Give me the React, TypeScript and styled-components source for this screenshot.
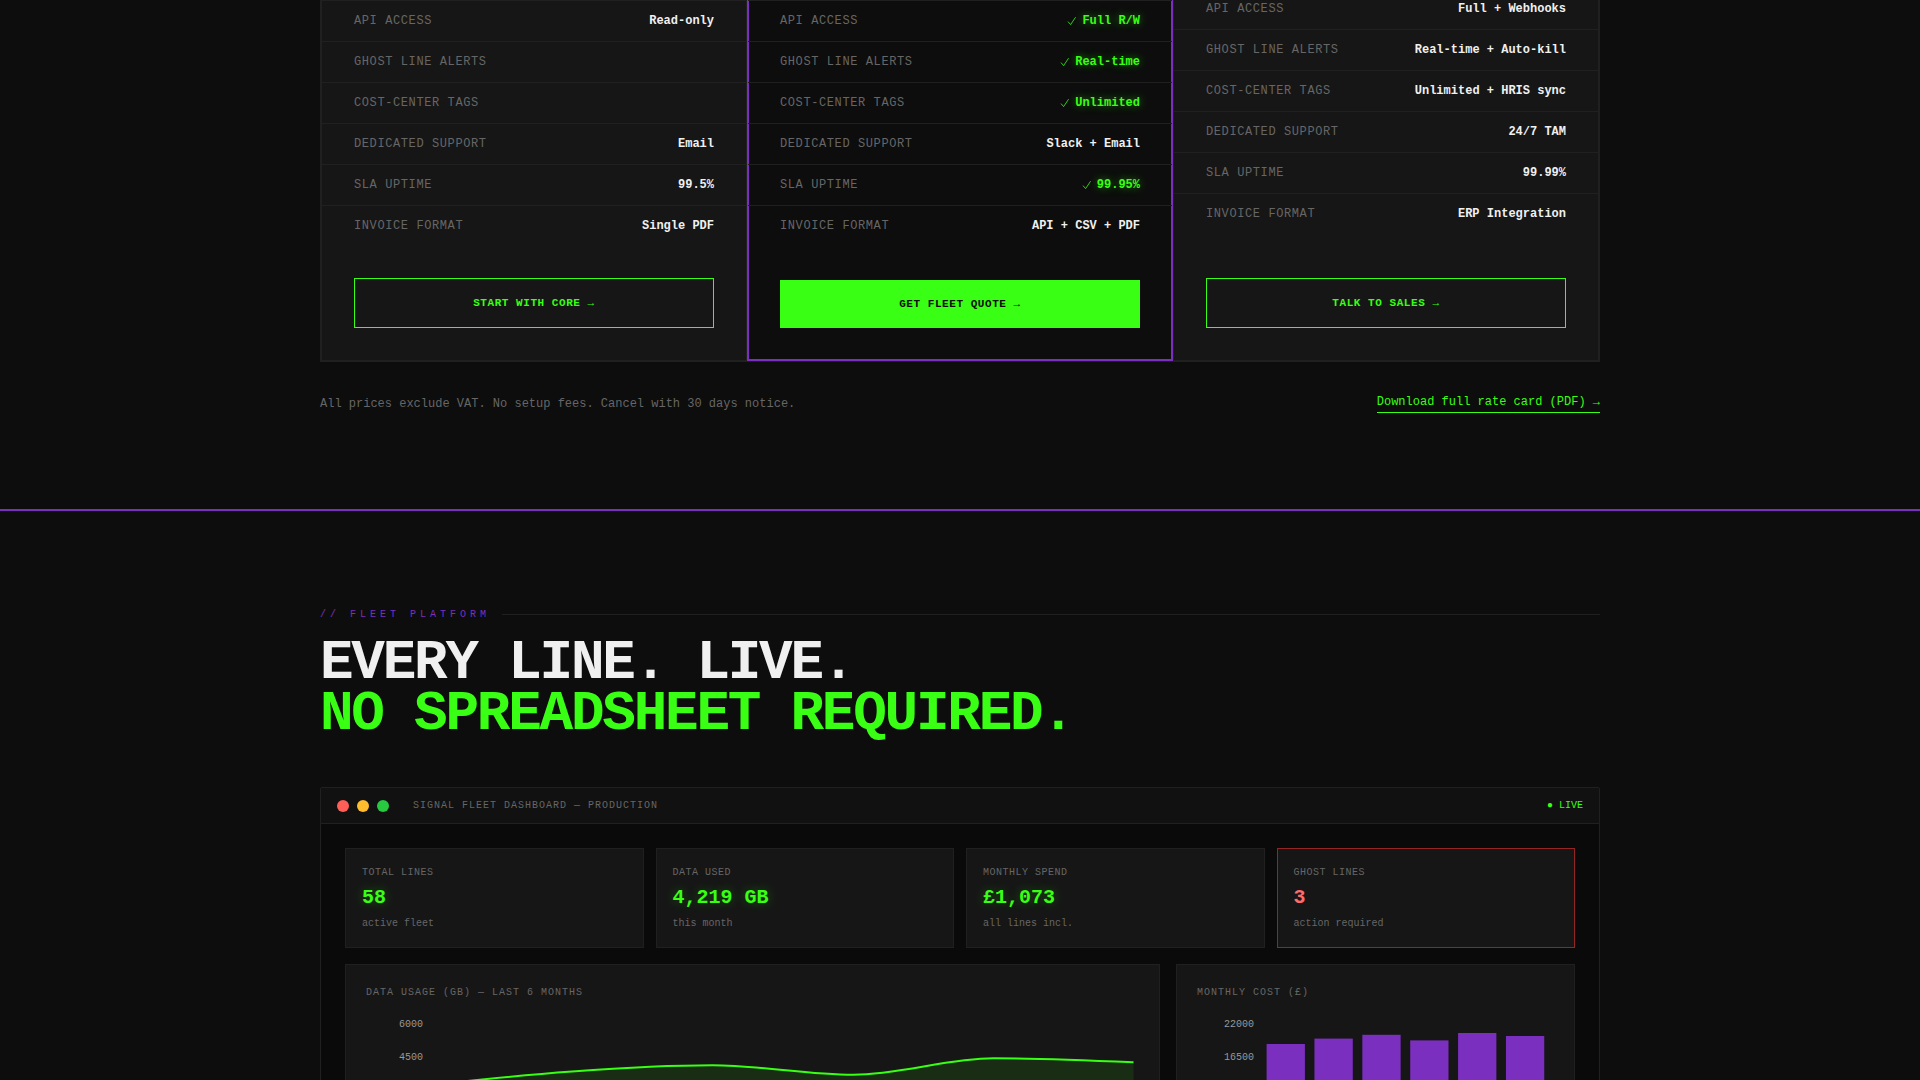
import React from 'react';
import styled, { createGlobalStyle } from 'styled-components';

const color = {
  page: '#0d0d0d',
  card: '#161616',
  bar: '#111111',
  screen: '#0a0a0a',
  line: '#202020',
  muted: '#666666',
  text: '#f0f0f0',
  green: '#39ff14',
  purple: '#7b2fbe',
  danger: '#ff6b6b',
};

const GlobalStyle = createGlobalStyle`
  *, *::before, *::after { box-sizing: border-box; }
  body {
    margin: 0;
    background: ${color.page};
    color: ${color.text};
    font-family: "Liberation Mono", "Courier New", monospace;
  }
  h2, p, dl, dd { margin: 0; }
`;

const Page = styled.main`
  height: 100vh;
  overflow: hidden;
`;

const Section = styled.section`
  padding: 0 max(24px, calc(50vw - 640px)) 96px;
`;

const PricingSection = styled(Section)`
  margin-top: -24px;
  border-bottom: 2px solid ${color.purple};
`;

const PlatformSection = styled(Section)`
  padding-top: 96px;
`;

const PlanGrid = styled.div`
  display: grid;
  grid-template-columns: repeat(3, 1fr);
  border: 1px solid ${color.line};
`;

const Plan = styled.article<{ $featured?: boolean; $lead: number }>`
  display: flex;
  flex-direction: column;
  padding-top: ${(p) => p.$lead}px;
  background: ${(p) => (p.$featured ? color.page : color.card)};
  border: 1px solid ${(p) => (p.$featured ? color.purple : color.line)};
  box-shadow: ${(p) => (p.$featured ? `inset 0 0 0 1px ${color.purple}` : 'none')};
`;

const FeatureList = styled.dl`
  border-top: 1px solid ${color.line};
`;

const Feature = styled.div`
  display: flex;
  justify-content: space-between;
  padding: 12px 32px;
  font-size: 12px;
  line-height: 16px;
  border-bottom: 1px solid ${color.line};

  &:last-child {
    border-bottom: 0;
  }
`;

const FeatureName = styled.dt`
  color: ${color.muted};
  letter-spacing: 0.05em;
  text-transform: uppercase;
`;

const FeatureValue = styled.dd<{ $included?: boolean }>`
  display: flex;
  align-items: center;
  gap: 6px;
  font-weight: 700;
  color: ${(p) => (p.$included ? color.green : color.text)};
  text-shadow: ${(p) => (p.$included ? '0 0 8px rgba(57, 255, 20, 0.5)' : 'none')};
`;

const CheckMark = styled.svg`
  width: 9px;
  height: 10px;
  fill: none;
  stroke: currentColor;
  stroke-width: 0.8;
`;

const PlanAction = styled.div`
  margin-top: auto;
  padding: 32px;
`;

const PlanButton = styled.button<{ $solid?: boolean }>`
  display: block;
  width: 100%;
  padding: 16px;
  border: ${(p) => (p.$solid ? '0' : `1px solid ${color.green}`)};
  background: ${(p) => (p.$solid ? color.green : 'transparent')};
  color: ${(p) => (p.$solid ? color.page : color.green)};
  font-family: inherit;
  font-size: 11px;
  font-weight: 700;
  line-height: 16px;
  letter-spacing: 0.05em;
  text-transform: uppercase;
  cursor: pointer;
`;

const PricingNote = styled.div`
  display: flex;
  justify-content: space-between;
  align-items: center;
  margin-top: 32px;
  font-size: 12px;
  line-height: 16px;
  color: ${color.muted};
`;

const RateCardLink = styled.a`
  padding-bottom: 2px;
  border-bottom: 1px solid ${color.green};
  color: ${color.green};
  text-decoration: none;
`;

const Eyebrow = styled.p`
  display: flex;
  align-items: center;
  gap: 12px;
  margin-bottom: 16px;
  font-size: 10px;
  line-height: 15px;
  letter-spacing: 0.4em;
  color: ${color.purple};

  &::after {
    content: '';
    flex: 1;
    height: 1px;
    background: ${color.line};
  }
`;

const Title = styled.h2`
  margin-bottom: 47px;
  font-size: 56px;
  font-weight: 700;
  line-height: 51px;
  letter-spacing: -0.04em;
`;

const TitleAccent = styled.span`
  display: block;
  color: ${color.green};
`;

const Dashboard = styled.div`
  border: 1px solid ${color.line};
  border-radius: 2px;
  background: ${color.screen};
`;

const TitleBar = styled.div`
  display: flex;
  align-items: center;
  gap: 24px;
  padding: 12px 16px 11px;
  font-size: 10px;
  line-height: 12px;
  background: ${color.bar};
  border-bottom: 1px solid ${color.line};
`;

const WindowDots = styled.div`
  display: flex;
  gap: 8px;
`;

const Dot = styled.span<{ $fill: string }>`
  width: 12px;
  height: 12px;
  border-radius: 50%;
  background: ${(p) => p.$fill};
`;

const WindowTitle = styled.span`
  flex: 1;
  color: ${color.muted};
  letter-spacing: 0.1em;
`;

const LiveStatus = styled.span`
  color: ${color.green};
`;

const DashboardBody = styled.div`
  display: grid;
  gap: 16px;
  padding: 24px;
`;

const StatGrid = styled.div`
  display: grid;
  grid-template-columns: repeat(4, 1fr);
  gap: 12px;
`;

const Stat = styled.div<{ $alert?: boolean }>`
  padding: 16px 16px 15px;
  background: ${color.card};
  border: 1px solid ${(p) => (p.$alert ? '#932525' : color.line)};
  font-size: 10px;
  line-height: 16px;
  color: ${color.muted};
`;

const StatLabel = styled.p`
  letter-spacing: 0.05em;
`;

const StatValue = styled.p<{ $alert?: boolean }>`
  margin: 4px 0 5px;
  font-size: 20px;
  font-weight: 700;
  line-height: 26px;
  color: ${(p) => (p.$alert ? color.danger : color.green)};
  text-shadow: ${(p) => (p.$alert ? 'none' : '0 0 12px rgba(57, 255, 20, 0.3)')};
`;

const ChartGrid = styled.div`
  display: grid;
  grid-template-columns: 815fr 399fr;
  gap: 16px;
`;

const ChartCard = styled.figure`
  margin: 0;
  padding: 20px;
  background: ${color.card};
  border: 1px solid ${color.line};
`;

const ChartTitle = styled.figcaption`
  margin-bottom: 16px;
  font-size: 10px;
  line-height: 16px;
  letter-spacing: 0.1em;
  color: ${color.muted};
`;

const Plot = styled.svg`
  display: block;
  width: 100%;
  height: auto;
`;

const Tick = styled.text`
  font-family: inherit;
  font-size: 10px;
  fill: #999999;
  text-anchor: end;
`;

interface FeatureRow {
  name: string;
  value?: string;
  included?: boolean;
}

interface PlanData {
  id: string;
  lead: number;
  featured?: boolean;
  action: string;
  features: FeatureRow[];
}

const plans: PlanData[] = [
  {
    id: 'core',
    lead: 22,
    action: 'Start with Core →',
    features: [
      { name: 'API Access', value: 'Read-only' },
      { name: 'Ghost Line Alerts' },
      { name: 'Cost-Center Tags' },
      { name: 'Dedicated Support', value: 'Email' },
      { name: 'SLA Uptime', value: '99.5%' },
      { name: 'Invoice Format', value: 'Single PDF' },
    ],
  },
  {
    id: 'fleet',
    lead: 22,
    featured: true,
    action: 'Get Fleet Quote →',
    features: [
      { name: 'API Access', value: 'Full R/W', included: true },
      { name: 'Ghost Line Alerts', value: 'Real-time', included: true },
      { name: 'Cost-Center Tags', value: 'Unlimited', included: true },
      { name: 'Dedicated Support', value: 'Slack + Email' },
      { name: 'SLA Uptime', value: '99.95%', included: true },
      { name: 'Invoice Format', value: 'API + CSV + PDF' },
    ],
  },
  {
    id: 'sales',
    lead: 10,
    action: 'Talk to Sales →',
    features: [
      { name: 'API Access', value: 'Full + Webhooks' },
      { name: 'Ghost Line Alerts', value: 'Real-time + Auto-kill' },
      { name: 'Cost-Center Tags', value: 'Unlimited + HRIS sync' },
      { name: 'Dedicated Support', value: '24/7 TAM' },
      { name: 'SLA Uptime', value: '99.99%' },
      { name: 'Invoice Format', value: 'ERP Integration' },
    ],
  },
];

const stats = [
  { label: 'TOTAL LINES', value: '58', note: 'active fleet' },
  { label: 'DATA USED', value: '4,219 GB', note: 'this month' },
  { label: 'MONTHLY SPEND', value: '£1,073', note: 'all lines incl.' },
  { label: 'GHOST LINES', value: '3', note: 'action required', alert: true },
];

const usageCurve =
  'M65 68C112 62.7 159 57.8 206 54.4S299.7 48.2 346.6 48.2S440.4 57.7 487.3 57.7S581 41.3 627.5 41.3S721 43.3 767.5 45.3';

const barTops = [27, 21.6, 17.8, 23.4, 16, 19];

function PlanCard({ plan }: { plan: PlanData }) {
  return (
    <Plan $featured={plan.featured} $lead={plan.lead}>
      <FeatureList>
        {plan.features.map((f) => (
          <Feature key={f.name}>
            <FeatureName>{f.name}</FeatureName>
            <FeatureValue $included={f.included}>
              {f.included && (
                <CheckMark viewBox="0 0 9 10" aria-label="Included">
                  <path d="M1 5.6L3.6 8.6L8.6 1.2" />
                </CheckMark>
              )}
              {f.value}
            </FeatureValue>
          </Feature>
        ))}
      </FeatureList>
      <PlanAction>
        <PlanButton type="button" $solid={plan.featured}>
          {plan.action}
        </PlanButton>
      </PlanAction>
    </Plan>
  );
}

function UsageChart() {
  return (
    <ChartCard>
      <ChartTitle>DATA USAGE (GB) — LAST 6 MONTHS</ChartTitle>
      <Plot viewBox="0 0 773 180">
        <Tick x="57" y="10">6000</Tick>
        <Tick x="57" y="43">4500</Tick>
        <path d={`${usageCurve}V139H65Z`} fill={color.green} fillOpacity="0.1" />
        <path d={usageCurve} fill="none" stroke={color.green} strokeWidth="2" />
      </Plot>
    </ChartCard>
  );
}

function CostChart() {
  return (
    <ChartCard>
      <ChartTitle>MONTHLY COST (£)</ChartTitle>
      <Plot viewBox="0 0 357 180">
        <Tick x="57" y="10">22000</Tick>
        <Tick x="57" y="43">16500</Tick>
        {barTops.map((top, i) => (
          <rect
            key={i}
            x={69.6 + i * 47.87}
            y={top}
            width="38.3"
            height={139 - top}
            fill={color.purple}
          />
        ))}
      </Plot>
    </ChartCard>
  );
}

export default function App() {
  return (
    <Page>
      <GlobalStyle />
      <PricingSection>
        <PlanGrid>
          {plans.map((plan) => (
            <PlanCard key={plan.id} plan={plan} />
          ))}
        </PlanGrid>
        <PricingNote>
          <span>All prices exclude VAT. No setup fees. Cancel with 30 days notice.</span>
          <RateCardLink href="#rate-card">Download full rate card (PDF) →</RateCardLink>
        </PricingNote>
      </PricingSection>

      <PlatformSection>
        <Eyebrow>// FLEET PLATFORM</Eyebrow>
        <Title>
          EVERY LINE. LIVE.
          <TitleAccent>NO SPREADSHEET REQUIRED.</TitleAccent>
        </Title>
        <Dashboard>
          <TitleBar>
            <WindowDots>
              <Dot $fill="#ff5f57" />
              <Dot $fill="#febc2e" />
              <Dot $fill="#28c840" />
            </WindowDots>
            <WindowTitle>SIGNAL FLEET DASHBOARD — PRODUCTION</WindowTitle>
            <LiveStatus>● LIVE</LiveStatus>
          </TitleBar>
          <DashboardBody>
            <StatGrid>
              {stats.map((s) => (
                <Stat key={s.label} $alert={s.alert}>
                  <StatLabel>{s.label}</StatLabel>
                  <StatValue $alert={s.alert}>{s.value}</StatValue>
                  <p>{s.note}</p>
                </Stat>
              ))}
            </StatGrid>
            <ChartGrid>
              <UsageChart />
              <CostChart />
            </ChartGrid>
          </DashboardBody>
        </Dashboard>
      </PlatformSection>
    </Page>
  );
}
